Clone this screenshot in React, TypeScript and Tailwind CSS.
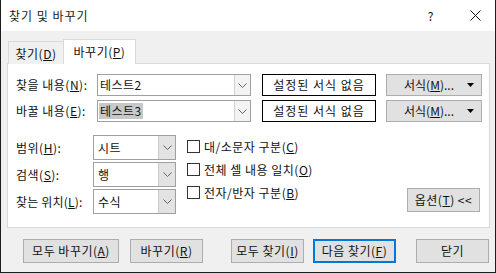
import React from 'react';

const font = { fontFamily: '"Noto Sans CJK KR", "Noto Sans", sans-serif' };

const Chevron = () => (
  <svg width="9" height="5" viewBox="0 0 9 5" fill="none">
    <path d="M0.5 0.5 L4.5 4.5 L8.5 0.5" stroke="#606060" strokeWidth="1" />
  </svg>
);

const Caret = () => (
  <svg width="7" height="4" viewBox="0 0 7 4">
    <path d="M0 0 H7 L3.5 4 Z" fill="#000" />
  </svg>
);

const Combo = ({ value, selected }: { value: string; selected?: boolean }) => (
  <div className="flex h-[22px] w-[154px] border border-[#a0a0a0] bg-white">
    <div className="flex flex-1 items-center pl-[1px]">
      <span className={selected ? 'bg-[#c8c8c8] px-[1px] leading-[16px]' : 'px-[1px] leading-[16px]'}>{value}</span>
    </div>
    <div className="flex w-[16px] items-center justify-center border-l border-[#d0d0d0] bg-[#f3f3f3]">
      <Chevron />
    </div>
  </div>
);

const Select = ({ value }: { value: string }) => (
  <div className="flex h-[25px] w-[83px] border border-[#a0a0a0] bg-white">
    <div className="flex flex-1 items-center pl-[4px]">{value}</div>
    <div className="flex w-[17px] items-center justify-center border-l border-[#c8c8c8] bg-[#e3e3e3]">
      <Chevron />
    </div>
  </div>
);

const Check = ({ children }: { children: React.ReactNode }) => (
  <div className="flex h-[23px] items-center">
    <div className="h-[13px] w-[13px] border border-[#333] bg-white" />
    <span className="ml-[4px]">{children}</span>
  </div>
);

const Btn = ({ children, w, ml, primary }: { children: React.ReactNode; w: string; ml: string; primary?: boolean }) => (
  <div
    className={`${w} ${ml} flex h-[24px] items-center justify-center bg-[#e1e1e1] ${
      primary ? 'border-2 border-[#0078d7]' : 'border border-[#adadad]'
    }`}
  >
    {children}
  </div>
);

export default function App() {
  return (
    <div
      className="flex h-[273px] w-[496px] flex-col border border-t-0 border-[#1c1c1c] text-[12px] tracking-[0.5px] text-[#111]"
      style={font}
    >
      {/* title bar */}
      <div className="flex h-[31px] items-center bg-white pl-[8px]">
        <span className="text-[12px] tracking-[1px] text-[#1a1a1a]">찾기 및 바꾸기</span>
        <span className="ml-auto mr-[36px] text-[12px]">?</span>
        <svg width="11" height="11" viewBox="0 0 11 11" className="mr-[14px]">
          <path d="M0.5 0.5 L10.5 10.5 M10.5 0.5 L0.5 10.5" stroke="#111" strokeWidth="1" />
        </svg>
      </div>

      <div className="flex-1 bg-[#f0f0f0]">
        {/* tabs */}
        <div className="relative z-10 mt-[8px] flex items-end pl-[7px]">
          <div className="flex h-[23px] w-[56px] items-center justify-center border border-b-0 border-[#d9d9d9] bg-[#f0f0f0] pt-[1px]">
            찾기(<u>D</u>)
          </div>
          <div className="-ml-px flex h-[25px] w-[73px] items-center justify-center border border-b-0 border-[#d9d9d9] bg-white pb-[1px]">
            바꾸기(<u>P</u>)
          </div>
        </div>

        {/* panel */}
        <div className="ml-[6px] -mt-px flex h-[165px] w-[483px] flex-col border border-[#d9d9d9] bg-white">
          <div className="ml-[8px] mt-[10px] flex items-center">
            <span className="w-[81px]">
              찾을 내용(<u>N</u>):
            </span>
            <Combo value="테스트2" />
            <div className="ml-[11px] flex h-[22px] w-[114px] items-center justify-center border border-black tracking-[1px]">
              설정된 서식 없음
            </div>
            <div className="ml-[10px] flex h-[22px] w-[96px] items-center border border-[#adadad] bg-[#e1e1e1]">
              <span className="flex-1 text-center pl-[4px] tracking-normal">
                서식(<u>M</u>)...
              </span>
              <span className="mr-[7px] flex items-center">
                <Caret />
              </span>
            </div>
          </div>

          <div className="ml-[8px] mt-[4px] flex items-center">
            <span className="w-[81px]">
              바꿀 내용(<u>E</u>):
            </span>
            <Combo value="테스트3" selected />
            <div className="ml-[11px] flex h-[22px] w-[114px] items-center justify-center border border-black tracking-[1px]">
              설정된 서식 없음
            </div>
            <div className="ml-[10px] flex h-[22px] w-[96px] items-center border border-[#adadad] bg-[#e1e1e1]">
              <span className="flex-1 text-center pl-[4px] tracking-normal">
                서식(<u>M</u>)...
              </span>
              <span className="mr-[7px] flex items-center">
                <Caret />
              </span>
            </div>
          </div>

          <div className="ml-[8px] mt-[13px] flex">
            <div className="flex flex-col gap-[2px]">
              <div className="flex items-center">
                <span className="w-[77px]">
                  범위(<u>H</u>):
                </span>
                <Select value="시트" />
              </div>
              <div className="flex items-center">
                <span className="w-[77px]">
                  검색(<u>S</u>):
                </span>
                <Select value="행" />
              </div>
              <div className="flex items-center">
                <span className="w-[77px] tracking-[0.2px]">
                  찾는 위치(<u>L</u>):
                </span>
                <Select value="수식" />
              </div>
            </div>

            <div className="ml-[11px] flex flex-col">
              <Check>
                대/소문자 구분(<u>C</u>)
              </Check>
              <Check>
                전체 셀 내용 일치(<u>O</u>)
              </Check>
              <Check>
                전자/반자 구분(<u>B</u>)
              </Check>
            </div>

            <div className="ml-auto mr-[9px] mb-[2px] flex h-[24px] w-[73px] items-center justify-center self-end border border-[#adadad] bg-[#e1e1e1]">
              옵션(<u>T</u>)&nbsp;&lt;&lt;
            </div>
          </div>
        </div>

        {/* bottom buttons */}
        <div className="mt-[11px] flex pl-[22px]">
          <Btn w="w-[96px]" ml="ml-0">
            모두 바꾸기(<u>A</u>)
          </Btn>
          <Btn w="w-[73px]" ml="ml-[11px]">
            바꾸기(<u>R</u>)
          </Btn>
          <Btn w="w-[73px]" ml="ml-[28px]">
            모두 찾기(<u>I</u>)
          </Btn>
          <Btn w="w-[83px]" ml="ml-[9px]" primary>
            다음 찾기(<u>F</u>)
          </Btn>
          <Btn w="w-[73px]" ml="ml-[20px]">
            닫기
          </Btn>
        </div>
      </div>
    </div>
  );
}
